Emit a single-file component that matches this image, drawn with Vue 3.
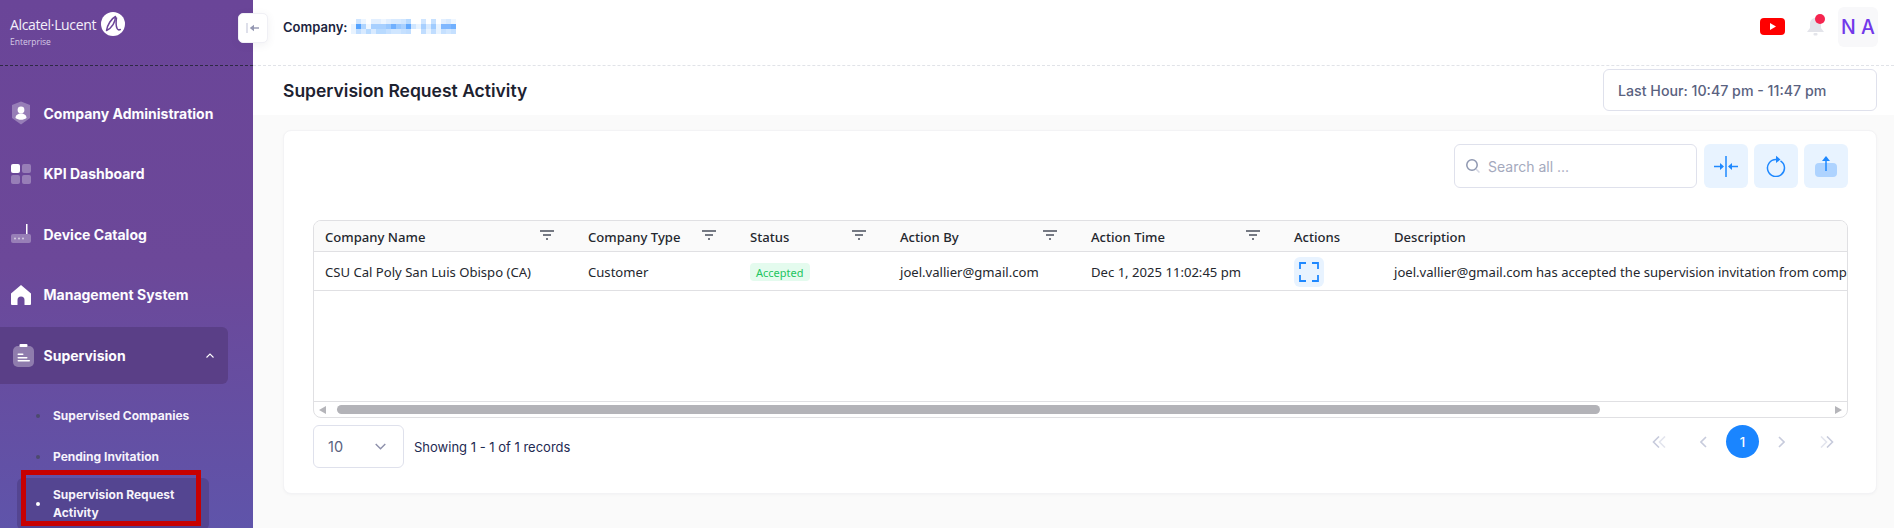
<script setup>
const menu = [
  { label: 'Company Administration', icon: 'shield' },
  { label: 'KPI Dashboard', icon: 'grid' },
  { label: 'Device Catalog', icon: 'router' },
  { label: 'Management System', icon: 'home' },
]
const columns = [
  { label: 'Company Name', width: 263, filter: true },
  { label: 'Company Type', width: 162, filter: true },
  { label: 'Status', width: 150, filter: true },
  { label: 'Action By', width: 191, filter: true },
  { label: 'Action Time', width: 203, filter: true },
  { label: 'Actions', width: 100, filter: false },
  { label: 'Description', width: 900, filter: false },
]
const template = columns.map(c => c.width + 'px').join(' ')
const mosaic = [
  '#ffffff','#cfe5ff','#ecf5ff','#ffffff','#e2efff','#e2efff','#eef6ff','#e2efff','#d8eaff','#d8eaff','#d0e6ff','#b8daff','#ffffff','#ffffff','#cfe5ff','#ffffff','#c5e0ff','#ffffff','#e2efff','#d8eaff','#eef6ff',
  '#e8f3ff','#55a3ff','#b0d5ff','#f0f7ff','#a8d0ff','#a8d0ff','#a8d0ff','#99c8ff','#70b0ff','#99c8ff','#a8d0ff','#60a8ff','#d0e6ff','#e8f3ff','#a8d0ff','#d8eaff','#a0ccff','#e8f3ff','#80b8ff','#80b8ff','#70b0ff',
  '#e8f3ff','#c0ddff','#d8eaff','#b8daff','#d8eaff','#b8daff','#b8daff','#c5e0ff','#d0e6ff','#d0e6ff','#c5e0ff','#c0ddff','#ffffff','#ffffff','#c0ddff','#e8f3ff','#c0ddff','#e8f3ff','#c5e0ff','#d0e6ff','#c5e0ff',
]
</script>

<template>
  <div class="app">
    <aside class="sidebar">
      <div class="brand">
        <div class="brand-text">
          <div class="brand-name">Alcatel·Lucent</div>
          <div class="brand-sub">Enterprise</div>
        </div>
        <svg class="brand-logo" width="24" height="24" viewBox="0 0 24 24">
          <circle cx="12" cy="12" r="12" fill="#fff"/>
          <path d="M5.500 18.500C6.500 12.500 10.500 6.500 14.500 4.500 14.500 10 11 16 5.500 18.500z" fill="none" stroke="#6a4598" stroke-width="1.500" stroke-linejoin="round"/>
          <path d="M15.500 6c-.6 4-.6 8 .6 10.500.6 1.300 1.900 1.600 3.200 1" fill="none" stroke="#6a4598" stroke-width="1.500" stroke-linecap="round"/>
        </svg>
      </div>
      <nav class="nav">
        <a v-for="item in menu" :key="item.label" class="nav-item">
          <span class="nav-icon">
            <svg v-if="item.icon === 'shield'" width="20" height="24" viewBox="0 0 20 24">
              <path d="M10 .5 19 4v13l-9 6.500L1 17V4z" fill="#fff" fill-opacity=".3"/>
              <circle cx="10" cy="9" r="3.400" fill="#fff"/>
              <path d="M4.500 17c0-3 2.500-4.500 5.500-4.500s5.500 1.500 5.500 4.500c-1.500 1.200-3.500 1.800-5.500 1.800s-4-.6-5.500-1.800z" fill="#fff"/>
            </svg>
            <svg v-else-if="item.icon === 'grid'" width="20" height="20" viewBox="0 0 20 20">
              <rect x="0" y="0" width="9" height="9" rx="2" fill="#fff"/>
              <rect x="11" y="0" width="9" height="9" rx="2" fill="#fff" fill-opacity=".3"/>
              <rect x="0" y="11" width="9" height="9" rx="2" fill="#fff" fill-opacity=".3"/>
              <rect x="11" y="11" width="9" height="9" rx="2" fill="#fff" fill-opacity=".3"/>
            </svg>
            <svg v-else-if="item.icon === 'router'" width="20" height="20" viewBox="0 0 20 20">
              <rect x="15" y="0" width="1.500" height="10" fill="#fff"/>
              <rect x="0" y="10" width="20" height="9" rx="2" fill="#fff" fill-opacity=".3"/>
              <circle cx="4" cy="14.500" r="1" fill="#fff" fill-opacity=".6"/>
              <circle cx="8" cy="14.500" r="1" fill="#fff" fill-opacity=".6"/>
              <circle cx="12" cy="14.500" r="1" fill="#fff" fill-opacity=".6"/>
            </svg>
            <svg v-else width="20" height="20" viewBox="0 0 20 20">
              <path d="M10 0 20 8.500V19a1 1 0 0 1-1 1h-5.500v-5a3.500 3.500 0 0 0-7 0v5H1a1 1 0 0 1-1-1V8.500z" fill="#fff"/>
            </svg>
          </span>
          <span>{{ item.label }}</span>
        </a>
        <a class="nav-item nav-open">
          <span class="nav-icon">
            <svg width="21" height="23" viewBox="0 0 21 23">
              <rect x="0" y="2" width="21" height="21" rx="5" fill="#fff" fill-opacity=".32"/>
              <rect x="6.500" y="0" width="8" height="3" rx="1" fill="#fff"/>
              <rect x="4.500" y="9.500" width="6" height="1.500" rx=".7" fill="#fff"/>
              <rect x="4.500" y="13" width="10" height="1.500" rx=".7" fill="#fff"/>
              <rect x="4.500" y="16" width="12.500" height="1.500" rx=".7" fill="#fff"/>
            </svg>
          </span>
          <span>Supervision</span>
          <svg class="chev-up" width="8" height="5" viewBox="0 0 8 5"><path d="M.5 4.500 4 1l3.500 3.500" fill="none" stroke="#fff" stroke-width="1.100"/></svg>
        </a>
        <div class="sub-list">
          <a class="sub-item"><i class="dot"></i><span>Supervised Companies</span></a>
          <a class="sub-item"><i class="dot"></i><span>Pending Invitation</span></a>
          <a class="sub-item sub-active"><i class="dot dot-on"></i><span>Supervision Request<br>Activity</span></a>
        </div>
      </nav>
      <div class="highlight"></div>
    </aside>

    <button class="collapse" type="button" aria-label="Collapse">
      <svg width="14" height="12" viewBox="0 0 14 12">
        <path d="M1 1v10" stroke="#c9cbdd" stroke-width="1.200" fill="none"/>
        <path d="M13 6H5" stroke="#9497b2" stroke-width="1.400" fill="none"/>
        <path d="M8 2.800 3.800 6 8 9.200z" fill="#9497b2"/>
      </svg>
    </button>

    <main class="main">
      <header class="topbar">
        <div class="company">
          <span>Company:</span>
          <span class="mosaic">
            <i v-for="(c, i) in mosaic" :key="i" :style="{ background: c }"></i>
          </span>
        </div>
        <div class="top-right">
          <svg width="25" height="17" viewBox="0 0 25 17">
            <rect width="25" height="17" rx="4" fill="#f00"/>
            <path d="M10 5l6 3.500-6 3.500z" fill="#fff"/>
          </svg>
          <span class="bell">
            <svg width="19" height="20" viewBox="0 0 19 20">
              <path d="M9.500 1C6 1 4 3.500 4 7v4l-3 4h17l-3-4V7c0-3.500-2-6-5.500-6z" fill="#e3e4ea"/>
              <rect x="7.500" y="16" width="4" height="2.500" rx="1" fill="#e3e4ea"/>
            </svg>
            <i class="bell-dot"></i>
          </span>
          <div class="avatar">N A</div>
        </div>
      </header>

      <div class="titlebar">
        <h1>Supervision Request Activity</h1>
        <div class="range">Last Hour: 10:47 pm - 11:47 pm</div>
      </div>

      <section class="content">
        <div class="card">
          <div class="toolbar">
            <label class="search">
              <svg width="16" height="16" viewBox="0 0 16 16">
                <circle cx="7" cy="7" r="5.200" fill="none" stroke="#8e97b0" stroke-width="1.500"/>
                <path d="M11 11l3.500 3.500" stroke="#d5d8e4" stroke-width="1.500"/>
              </svg>
              <span>Search all ...</span>
            </label>
            <button class="tool" type="button" aria-label="Collapse columns">
              <svg width="24" height="21" viewBox="0 0 24 21" fill="none" stroke="#1e88ff" stroke-width="1.500">
                <path d="M12 0v21"/>
                <path d="M0 10.500h7M24 10.500h-7"/>
                <path d="M10 10.500 6 7v7zM14 10.500 18 7v7z" fill="#1e88ff" stroke="none"/>
              </svg>
            </button>
            <button class="tool" type="button" aria-label="Refresh">
              <svg width="20" height="22" viewBox="0 0 20 22" fill="none">
                <path d="M14.500 5.800A8.500 8.500 0 1 1 10 4.500" stroke="#1e88ff" stroke-width="1.500"/>
                <path d="M10 .8 14.500 4.500 10 8z" fill="#1e88ff"/>
              </svg>
            </button>
            <button class="tool" type="button" aria-label="Export">
              <svg width="22" height="21" viewBox="0 0 22 21">
                <rect y="7" width="22" height="14" rx="4" fill="#aed3ff"/>
                <path d="M11 15V3" fill="none" stroke="#1e88ff" stroke-width="1.500"/>
                <path d="M11 0 15 5H7z" fill="#1e88ff"/>
              </svg>
            </button>
          </div>

          <div class="table">
            <div class="thead" :style="{ gridTemplateColumns: template }">
              <div v-for="c in columns" :key="c.label" class="th">
                <span>{{ c.label }}</span>
                <svg v-if="c.filter" class="filter" width="14" height="10" viewBox="0 0 14 10" fill="none" stroke="#4a4f5c" stroke-width="1.400">
                  <path d="M0 1h14M3 5h8M6 9h2"/>
                </svg>
              </div>
            </div>
            <div class="tr" :style="{ gridTemplateColumns: template }">
              <div class="td">CSU Cal Poly San Luis Obispo (CA)</div>
              <div class="td">Customer</div>
              <div class="td"><span class="badge">Accepted</span></div>
              <div class="td">joel.vallier@gmail.com</div>
              <div class="td">Dec 1, 2025 11:02:45 pm</div>
              <div class="td">
                <span class="view">
                  <svg width="20" height="20" viewBox="0 0 20 20" fill="none" stroke="#1e88ff" stroke-width="1.800">
                    <path d="M1 7V1h6M13 1h6v6M19 13v6h-6M7 19H1v-6"/>
                  </svg>
                </span>
              </div>
              <div class="td">joel.vallier@gmail.com has accepted the supervision invitation from company CSU Cal Poly San Luis Obispo (CA)</div>
            </div>
            <div class="tbody-empty"></div>
            <div class="hscroll">
              <i class="arrow-l"></i>
              <div class="track"><div class="thumb"></div></div>
              <i class="arrow-r"></i>
            </div>
          </div>

          <div class="footer">
            <div class="pager-left">
              <div class="size">
                <span>10</span>
                <svg width="11" height="7" viewBox="0 0 11 7"><path d="M.7 1l4.800 4.800L10.300 1" fill="none" stroke="#8d90ab" stroke-width="1.400"/></svg>
              </div>
              <div class="showing">Showing 1 - 1 of 1 records</div>
            </div>
            <div class="pager">
              <svg class="p-first" width="15" height="12" viewBox="0 0 15 12" fill="none" stroke-width="1.600"><path d="M7 .5 1.500 6 7 11.500" stroke="#c7cbdc"/><path d="M13 .5 7.500 6 13 11.500" stroke="#e3e5ee"/></svg>
              <svg class="p-prev" width="7" height="12" viewBox="0 0 7 12"><path d="M6 1 1 6l5 5" fill="none" stroke="#c7cbdc" stroke-width="1.600"/></svg>
              <span class="page">1</span>
              <svg class="p-next" width="7" height="12" viewBox="0 0 7 12"><path d="m1 1 5 5-5 5" fill="none" stroke="#c7cbdc" stroke-width="1.600"/></svg>
              <svg class="p-last" width="15" height="12" viewBox="0 0 15 12" fill="none" stroke-width="1.600"><path d="M2 .5 7.500 6 2 11.500" stroke="#e3e5ee"/><path d="M8 .5 13.500 6 8 11.500" stroke="#c7cbdc"/></svg>
            </div>
          </div>
        </div>
      </section>
    </main>
  </div>
</template>

<style>
html, body { margin: 0; height: 100%; overflow: hidden; background: #fff; }
</style>

<style scoped>
.app {
  position: relative;
  display: flex;
  width: 100%;
  height: 528px;
  overflow: hidden;
  font-family: Inter, "Liberation Sans", sans-serif;
}
.sidebar {
  position: relative;
  flex: 0 0 253px;
  height: 528px;
  background: linear-gradient(180deg, #6a4598 0%, #6c4899 50%, #5f54aa 100%);
  color: #fff;
  overflow: hidden;
}
.brand {
  box-sizing: border-box;
  height: 66px;
  padding: 12px 0 0 10px;
  display: flex;
  align-items: flex-start;
  gap: 5px;
  border-bottom: 1px dashed #2e2a45;
}
.brand-text { font-family: "Open Sans", sans-serif; }
.brand-name { font-size: 14px; line-height: 20px; margin-top: 3px; color: #f4f0fa; letter-spacing: -.35px; white-space: nowrap; }
.brand-sub { font-size: 8.500px; line-height: 10px; margin-top: 2px; color: #d6cbe6; }
.nav { display: flex; flex-direction: column; padding-top: 17px; }
.nav-item {
  display: flex;
  align-items: center;
  height: 60.500px;
  padding-left: 11px;
  font-size: 14px;
  font-weight: 700;
  color: #fdfcff;
}
.nav-icon {
  flex: 0 0 32.500px;
  display: flex;
  align-items: center;
}
.nav-open {
  height: 57px;
  margin-top: 2px;
  width: 228px;
  box-sizing: border-box;
  padding-left: 13px;
  background: #5a3f87;
  border-radius: 0 6px 6px 0;
}
.nav-open .nav-icon { flex-basis: 30.500px; }
.chev-up { margin-left: auto; margin-right: 14px; }
.sub-list { display: flex; flex-direction: column; margin-top: 11px; }
.sub-item {
  display: flex;
  align-items: center;
  box-sizing: border-box;
  font-size: 12px;
  font-weight: 700;
  line-height: 18px;
  color: #f6f3fb;
  padding-left: 36px;
  height: 41px;
}
.dot {
  flex: none;
  width: 4px;
  height: 4px;
  border-radius: 50%;
  background: #4c4a6e;
  margin-right: 13px;
}
.dot-on { background: #fff; }
.sub-active {
  height: 52px;
  margin: 1px 0 0 17px;
  width: 192px;
  padding-left: 19px;
  background: #544591;
  border-radius: 6px;
}
.highlight {
  position: absolute;
  left: 21px;
  top: 470px;
  width: 180px;
  height: 56px;
  box-sizing: border-box;
  border: 5px solid #c80000;
}
.collapse {
  position: absolute;
  left: 238px;
  top: 13px;
  width: 30px;
  height: 30px;
  padding: 0;
  border: 1px solid #f0f0f5;
  border-radius: 5px;
  background: #fff;
  box-shadow: 0 2px 8px rgba(60, 60, 90, .08);
  display: flex;
  align-items: center;
  justify-content: center;
  z-index: 2;
}
.main {
  flex: 1;
  min-width: 0;
  display: flex;
  flex-direction: column;
}
.topbar {
  box-sizing: border-box;
  height: 66px;
  flex: none;
  padding: 0 16px 12px 30px;
  display: flex;
  align-items: center;
  justify-content: space-between;
  border-bottom: 1px dashed #e1e3e8;
}
.company {
  display: flex;
  align-items: center;
  gap: 4px;
  font-size: 13px;
  font-weight: 600;
  color: #1b2540;
}
.mosaic {
  display: grid;
  grid-template-columns: repeat(21, 5px);
  grid-auto-rows: 5px;
}
.top-right { display: flex; align-items: center; }
.bell { position: relative; margin-left: 21px; margin-right: 13px; display: flex; }
.bell-dot {
  position: absolute;
  right: 0;
  top: -3px;
  width: 10px;
  height: 10px;
  border-radius: 50%;
  background: #f5254f;
}
.avatar {
  width: 40px;
  height: 40px;
  border-radius: 6px;
  background: #f8f8fa;
  color: #7239ea;
  font-size: 19.500px;
  font-weight: 500;
  display: flex;
  align-items: center;
  justify-content: center;
}
.titlebar {
  box-sizing: border-box;
  height: 49px;
  flex: none;
  padding: 3px 17px 0 30px;
  display: flex;
  align-items: flex-start;
  justify-content: space-between;
}
.titlebar h1 {
  margin: 0;
  padding-top: 10px;
  font-size: 17.500px;
  line-height: 24px;
  font-weight: 600;
  color: #1d2230;
}
.range {
  box-sizing: border-box;
  width: 274px;
  height: 42px;
  padding-left: 14px;
  display: flex;
  align-items: center;
  border: 1px solid #dfe1ec;
  border-radius: 6px;
  background: #fff;
  font-size: 14.200px;
  font-weight: 500;
  color: #5a6280;
}
.content {
  flex: 1;
  background: #fafafa;
  padding: 15px 17px 0 30px;
}
.card {
  box-sizing: border-box;
  height: 364px;
  padding: 13px 28px 0 29px;
  background: #fff;
  border: 1px solid #f3f3f5;
  border-radius: 8px;
  box-shadow: 0 1px 3px rgba(30, 30, 60, .03);
}
.toolbar { display: flex; justify-content: flex-end; gap: 6px; height: 76px; }
.search {
  box-sizing: border-box;
  width: 243px;
  height: 44px;
  margin-right: 1px;
  padding-left: 10px;
  display: flex;
  align-items: center;
  gap: 7px;
  border: 1px solid #dfe1ec;
  border-radius: 6px;
  font-size: 14px;
  color: #a4a9bd;
}
.tool {
  width: 44px;
  height: 44px;
  padding: 0;
  border: 0;
  border-radius: 6px;
  background: #e8f3ff;
  display: flex;
  align-items: center;
  justify-content: center;
}
.table {
  box-sizing: border-box;
  height: 198px;
  border: 1px solid #e0e0e3;
  border-radius: 8px;
  overflow: hidden;
  display: flex;
  flex-direction: column;
  font-family: "Noto Sans", "Open Sans", sans-serif;
  font-size: 13.100px;
  color: #24272e;
}
.thead, .tr { display: grid; flex: none; box-sizing: border-box; width: 100%; }
.thead {
  height: 31px;
  background: #fafafa;
  border-bottom: 1px solid #e0e0e3;
}
.th {
  display: flex;
  align-items: center;
  justify-content: space-between;
  padding: 1px 11px 0;
  font-weight: 500;
  box-sizing: border-box;
}
.filter { margin: -4px 12px 0 0; }
.tr {
  height: 39px;
  border-bottom: 1px solid #e0e0e3;
}
.td {
  display: flex;
  align-items: center;
  padding: 2px 11px 0;
  white-space: nowrap;
  overflow: hidden;
}
.badge {
  height: 18px;
  padding: 0 6px;
  display: inline-flex;
  align-items: center;
  border-radius: 4px;
  background: #e4fbee;
  color: #22c55e;
  font-size: 11px;
}
.view {
  width: 30px;
  height: 30px;
  border-radius: 6px;
  background: #e8f3ff;
  display: flex;
  align-items: center;
  justify-content: center;
}
.tbody-empty { flex: 1; min-height: 0; }
.hscroll {
  height: 16px;
  flex: none;
  border-top: 1px solid #e0e0e3;
  display: flex;
  align-items: center;
  padding: 0 5px;
  box-sizing: border-box;
}
.arrow-l, .arrow-r { width: 0; height: 0; border-top: 4.500px solid transparent; border-bottom: 4.500px solid transparent; }
.arrow-l { border-right: 7px solid #b5b5ba; }
.arrow-r { border-left: 7px solid #b5b5ba; }
.track { flex: 1; padding: 0 235px 0 11px; }
.thumb { height: 9px; border-radius: 5px; background: #b3b3b8; width: 100%; }
.footer {
  display: flex;
  justify-content: space-between;
  margin-top: 7px;
}
.pager-left { display: flex; align-items: center; gap: 10px; }
.size {
  box-sizing: border-box;
  width: 91px;
  height: 43px;
  padding: 0 17px 0 14px;
  display: flex;
  align-items: center;
  justify-content: space-between;
  border: 1px solid #dfe1ec;
  border-radius: 6px;
  font-size: 14.500px;
  color: #5a6280;
}
.showing { font-size: 13px; color: #1e2a52; }
.pager { display: flex; align-items: flex-start; padding-right: 14px; }
.pager svg { margin-top: 11px; }
.p-first { margin-right: 33px; }
.p-prev { margin-right: 19px; }
.page {
  width: 33px;
  height: 33px;
  border-radius: 50%;
  background: #1a85ff;
  color: #fff;
  font-size: 13px;
  font-weight: 500;
  display: flex;
  align-items: center;
  justify-content: center;
  margin-right: 19px;
}
.p-next { margin-right: 34px; }
</style>
